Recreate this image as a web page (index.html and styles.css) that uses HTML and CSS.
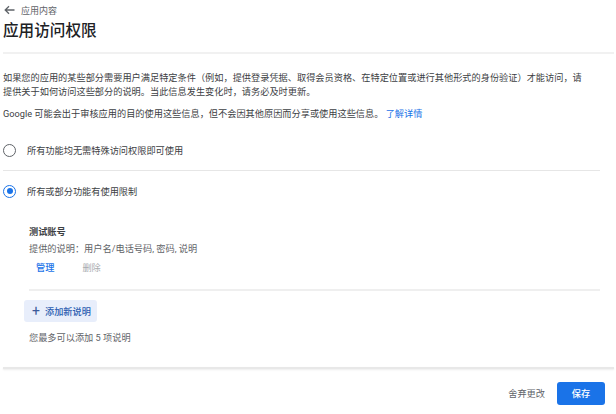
FILE: index.html
```html
<!DOCTYPE html>
<html lang="zh-CN">
<head>
<meta charset="utf-8">
<link rel="stylesheet" href="styles.css">
</head>
<body>
<div class="page">
  <div class="crumb">
    <svg class="back" width="11" height="10" viewBox="0 0 11 10"><path d="M10.5 5H1.5M5 1.2L1.2 5L5 8.8" fill="none" stroke="#5f6368" stroke-width="1.3"/></svg>
    <span>应用内容</span>
  </div>
  <h1 class="title">应用访问权限</h1>
  <div class="rule-top"></div>

  <p class="para">如果您的应用的某些部分需要用户满足特定条件（例如，提供登录凭据、取得会员资格、在特定位置或进行其他形式的身份验证）才能访问，请提供关于如何访问这些部分的说明。当此信息发生变化时，请务必及时更新。</p>
  <p class="para note">Google 可能会出于审核应用的目的使用这些信息，但不会因其他原因而分享或使用这些信息。 <a class="link">了解详情</a></p>

  <div class="options">
    <div class="option">
      <span class="radio"></span>
      <span class="opt-label">所有功能均无需特殊访问权限即可使用</span>
    </div>
    <div class="rule-mid"></div>
    <div class="option">
      <span class="radio checked"></span>
      <span class="opt-label">所有或部分功能有使用限制</span>
    </div>
  </div>

  <div class="details">
    <div class="item-title">测试账号</div>
    <div class="item-desc">提供的说明：用户名/电话号码, 密码, 说明</div>
    <div class="actions">
      <span class="act primary">管理</span>
      <span class="act disabled">删除</span>
    </div>
    <div class="rule-inner"></div>
    <div class="add-btn"><span class="plus">+</span><span>添加新说明</span></div>
    <div class="limit">您最多可以添加 5 项说明</div>
  </div>

  <div class="rule-bottom"></div>
  <div class="footer">
    <span class="discard">舍弃更改</span>
    <span class="save">保存</span>
  </div>
</div>
</body>
</html>
```
FILE: styles.css
```css
* { box-sizing: border-box; }
html, body { margin: 0; padding: 0; background: #fff; }
body {
  font-family: Roboto, "Noto Sans CJK SC", sans-serif;
  color: #3c4043;
  font-size: 9.2px;
  width: 616px;
  height: 414px;
  overflow: hidden;
}
.page { padding-left: 3px; }
.crumb {
  margin-top: 4px;
  height: 12px;
  display: flex;
  align-items: center;
  gap: 6px;
  font-size: 9px;
  color: #5f6368;
  padding-left: 1px;
}
.back { display: block; }
.title {
  margin: 5px 0 0;
  font-size: 15.6px;
  line-height: 20px;
  font-weight: 500;
  color: #202124;
}
.rule-top {
  margin-top: 11px;
  height: 2px;
  background: #f1f1f1;
  margin-right: 2px;
}
.para {
  margin: 17px 0 0;
  line-height: 14px;
  width: 584px;
  color: #3c4043;
}
.note { margin-top: 8px; }
.link { color: #1a73e8; text-decoration: none; }
.options { margin-top: 9px; margin-right: 16px; }
.option {
  height: 40px;
  display: flex;
  align-items: center;
  gap: 11px;
}
.radio {
  width: 13px;
  height: 13px;
  border-radius: 50%;
  border: 1.6px solid #5f6368;
  display: flex;
  align-items: center;
  justify-content: center;
}
.radio.checked { border-color: #1a73e8; }
.radio.checked::after {
  content: "";
  width: 6px;
  height: 6px;
  border-radius: 50%;
  background: #1a73e8;
}
.opt-label { color: #3c4043; }
.rule-mid { height: 1px; background: #e6e6e6; }
.details {
  padding-left: 26px;
  margin-right: 16px;
}
.item-title {
  margin-top: 14px;
  line-height: 14px;
  font-weight: 700;
  color: #3c4043;
}
.item-desc {
  margin-top: 3px;
  line-height: 14px;
  color: #5f6368;
}
.actions {
  margin-top: 5px;
  display: flex;
  gap: 28px;
  padding-left: 7px;
  line-height: 14px;
}
.act.primary { color: #1a73e8; font-weight: 500; }
.act.disabled { color: #a8abaf; }
.rule-inner {
  margin-top: 14px;
  height: 2px;
  background: #efefef;
}
.add-btn {
  margin-top: 9px;
  margin-left: -5px;
  width: 73px;
  height: 22px;
  border-radius: 3px;
  background: #e8eefb;
  color: #2a5cb0;
  font-weight: 500;
  display: flex;
  align-items: center;
  padding-left: 8px;
  gap: 5px;
}
.plus { font-size: 14px; font-weight: 400; line-height: 1; color: #3c5a9a; margin-top: -1px; }
.limit {
  margin-top: 9px;
  line-height: 14px;
  color: #5f6368;
}
.rule-bottom {
  margin-top: 22px;
  height: 2px;
  background: #e8e8e8;
  box-shadow: 0 1px 2px rgba(0,0,0,0.08);
  margin-right: 2px;
}
.footer {
  height: 40px;
  display: flex;
  align-items: center;
  justify-content: flex-end;
  padding-right: 11px;
  gap: 12px;
  margin-top: 4px;
}
.discard { color: #5f6368; }
.save {
  width: 48px;
  height: 23px;
  border-radius: 3px;
  background: #1a73e8;
  color: #fff;
  font-weight: 500;
  display: flex;
  align-items: center;
  justify-content: center;
}
```
